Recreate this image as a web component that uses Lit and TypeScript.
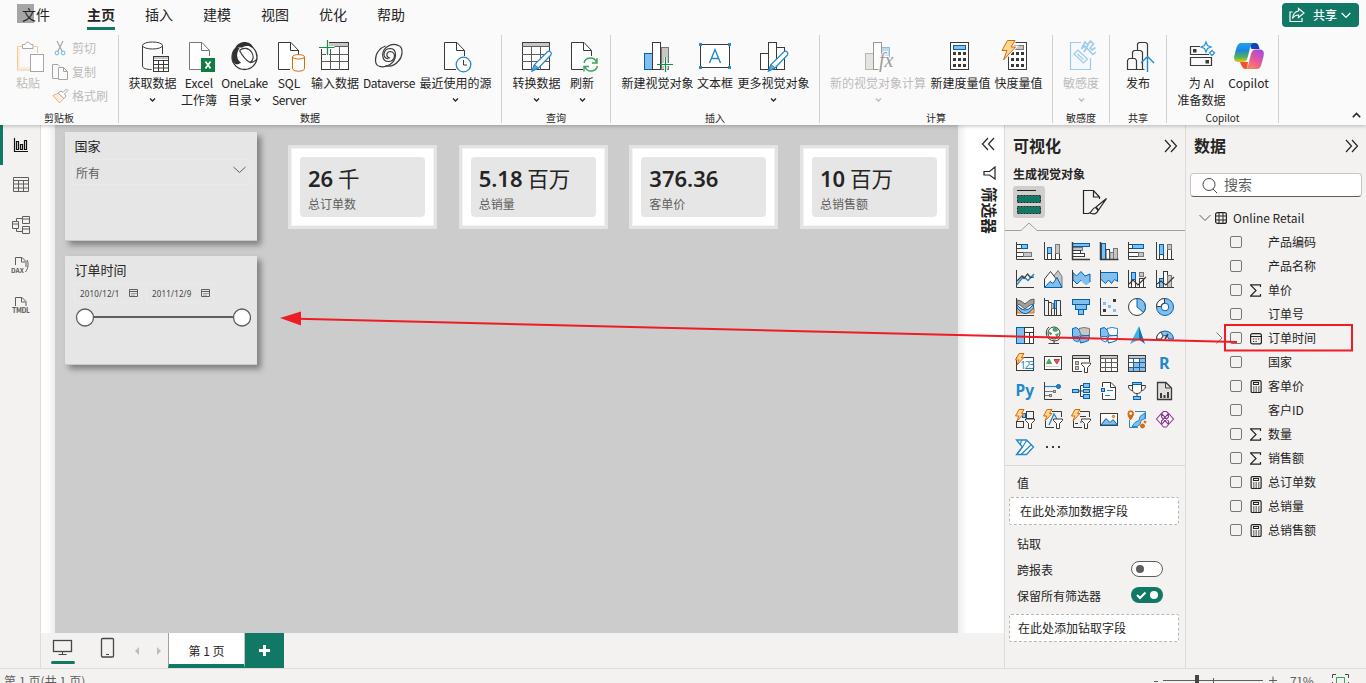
import { LitElement, html, svg, css, nothing } from "lit";
import { customElement } from "lit/decorators.js";

type Kind = "w" | "b" | "g" | "n";
const INK = "#3b3a39";
const SKY = "#83beec";
const GREY = "#c8c6c4";
const fills: Record<Kind, [string, string]> = {
  w: ["#fff", INK],
  b: [SKY, "#0063b1"],
  g: [GREY, "#797775"],
  n: ["none", INK],
};
const r = (x: number, y: number, w: number, h: number, k: Kind = "w") =>
  svg`<rect x=${x} y=${y} width=${w} height=${h} fill=${fills[k][0]} stroke=${fills[k][1]} />`;
const p = (d: string, stroke = INK, fill = "none", sw = 1) =>
  svg`<path d=${d} stroke=${stroke} fill=${fill} stroke-width=${sw} />`;
const c = (x: number, y: number, rad: number, stroke = INK, fill = "none", sw = 1) =>
  svg`<circle cx=${x} cy=${y} r=${rad} stroke=${stroke} fill=${fill} stroke-width=${sw} />`;
const axis = () => p("M1.5 1V18.5H19");
const bolt = (x: number, y: number) =>
  svg`<path transform="translate(${x} ${y})" d="M4 .5h5L6.500 4.500H9L2 12 3.800 7H.5z" fill="#fdd890" stroke="#d8690a"/>`;
const funnel = (x: number, y: number) =>
  svg`<path transform="translate(${x} ${y})" d="M.5 .5h9v1.500l-3 3V10h-3V5l-3-3z" fill="#fff" stroke="#3b3a39"/>`;

/* ---------- ribbon icons, drawn on the ribbon's own coordinate grid ---------- */
const page = (x: number, y: number, s = INK) => svg`
  <path d="M${x + 9} ${y + 27.5}H${x + 0.5}V${y + 0.5}H${x + 13}L${x + 20.5} ${y + 8}V${y + 13}" fill="#fff" stroke="none"/>
  <path d="M${x + 12} ${y + 27.5}H${x + 0.5}V${y + 0.5}H${x + 13}L${x + 20.5} ${y + 8.5}V${y + 14}M${x + 12.5} ${y + 0.5}V${y + 8.5}H${x + 20.5}" fill="none" stroke=${s}/>`;
const grid = (x: number, y: number) => svg`
  <rect x=${x + 0.5} y=${y + 0.5} width="27" height="27" fill="#fff" stroke=${INK}/>
  <rect x=${x + 1} y=${y + 1} width="26" height="3" fill=${GREY}/>
  <path d="M${x} ${y + 4.5}h28M${x} ${y + 12.5}h28M${x} ${y + 19.5}h28M${x + 9.5} ${y + 5}v23M${x + 18.500} ${y + 5}v23" stroke="#605e5c" fill="none"/>`;
const pencil = (x: number, y: number) => svg`
  <path transform="translate(${x} ${y})" d="M.5 20.500L3 14 16 1.300c2-1.600 5 .9 3.400 3.200L7 17.500z" fill="#fff" stroke="#2188ca" stroke-width="1.200"/>
  <path transform="translate(${x} ${y})" d="M.5 20.500L3 14l4 3.500z" fill="#5aa9e0" stroke="#2188ca"/>`;
const calc = (x: number, top: string, line: string) => svg`
  <rect x=${x + 0.5} y="42.5" width="18" height="27" fill="#fff" stroke=${INK}/>
  <rect x=${x + 3.5} y="45.5" width="12" height="4" fill=${top} stroke=${line}/>
  ${[0, 1, 2].map((j) => [0, 1, 2].map((i) => svg`<rect x=${x + 3 + i * 5} y=${52 + j * 6} width="3" height="3" fill=${INK}/>`))}`;

const ribbonIcons: Record<string, () => unknown> = {
  getdata: () => svg`
    <path d="M142.500 45.500V66c0 2.500 4 3.500 9 3.500M162.500 45.500V54" fill="none" stroke=${INK}/>
    <ellipse cx="152.500" cy="45.500" rx="10" ry="3.500" fill="#fff" stroke=${INK}/>
    <rect x="153.500" y="56.500" width="15" height="15" fill="#fff" stroke=${INK}/>
    <path d="M154 58h14" stroke=${GREY} stroke-width="2"/>
    <path d="M153 60.500h16M153 64.500h16M153 68h16M158.500 60v11M163.500 60v11" stroke=${INK} fill="none"/>`,
  excel: () => svg`${page(189, 42, "#797775")}
    <rect x="201" y="58" width="14" height="14" fill="#107c41"/>
    <path d="M205.500 61.500l5 7M210.500 61.500l-5 7" stroke="#fff" stroke-width="1.800"/>`,
  onelake: () => svg`
    <circle cx="244.500" cy="57" r="12.500" fill="#fff" stroke=${INK} stroke-width="1.300"/>
    <path d="M235.500 47.500c1-3 5-5.500 9-5.500s7.500 2 9 6c-4-2.500-8-2.500-11-.5z" fill="#323130"/>
    <path d="M236.500 47c-4.500 4.500-5.500 10.500-3 15 2 3 4 3 7 .8-4-4.500-4.500-9-1-14.800z" fill="#323130"/>
    <path d="M239.500 50.500c3.500-3 9-3 12 1.500s1.500 9-1.500 10.500M239.500 50.500c3.500 6.500 6 9.500 10.500 12 3.500.5 5-1.500 7-3.500M233 62.500c2.500-2 5-2 7.500.5" fill="none" stroke=${INK} stroke-width="1.200"/>`,
  sql: () => svg`${page(278, 42)}
    <path d="M292.500 57v11.500c0 3.600 12 3.600 12 0V57" fill="#fff" stroke="#d8690a"/>
    <ellipse cx="298.500" cy="56.800" rx="6" ry="2.200" fill="#fff" stroke="#d8690a"/>`,
  enter: () => svg`${grid(321, 42)}
    <rect x="318" y="39" width="11" height="8" fill="#fafafa"/>
    <path d="M319 47.500h15.500M327.500 40v15" stroke="#fafafa" stroke-width="3"/>
    <path d="M319 47.500h15.500M327.500 40v15" stroke="#0f9146" stroke-width="1.200"/>`,
  dataverse: () => svg`<g fill="none" stroke=${INK} stroke-width="1.200">
    <path d="M399.500 46c-4-2.500-9-1.500-12 .5-7 4.500-6 15 1 15 6.500 0 8.500-9 2-10-4.500 0-5 6-.5 6.500"/>
    <path d="M378.500 66c4 1.500 8.500 .5 11.500-1.500 7-4.500 7.500-15.500 .5-16-7 0-9.500 9.500-2 10.500"/>
    <path d="M399.500 46c4 2.500 3 11-1 15-4 4.500-9 6-13 4.500M378.500 66c-4-1.500-4-10 0-15 2-2.500 4-4 7-5"/></g>`,
  recent: () => svg`${page(444, 42)}
    <circle cx="463.500" cy="64.500" r="7.300" fill="#fff" stroke="#2188ca" stroke-width="1.300"/>
    <path d="M463.500 60v5h3.500" fill="none" stroke=${INK}/>`,
  transform: () => svg`${grid(522, 42)}${pencil(531.500, 50.500)}`,
  refresh: () => svg`${page(571, 42)}
    <path d="M584 63c1.500-6 10-7 12.500-1M597 58v5h-5M597.500 66c-1.500 6-10 7-12.500 1M584 71.500v-5h5" fill="none" stroke="#38a457" stroke-width="1.400"/>`,
  newvisual: () => svg`
    <rect x="644.500" y="53.500" width="8" height="16" fill=${SKY} stroke="#0063b1"/>
    <rect x="661.500" y="47.500" width="7" height="22" fill=${GREY} stroke="#797775"/>
    <rect x="652.500" y="42.500" width="8" height="27" fill="#fff" stroke=${INK}/>
    <path d="M662 64.500h11M665.500 57v15" stroke="#fafafa" stroke-width="3"/>
    <path d="M657 64.500h16M665.500 57v15" stroke="#0f9146" stroke-width="1.200"/>`,
  textbox: () => svg`
    <rect x="700.500" y="44.500" width="29" height="23" fill="#fff" stroke=${INK}/>
    ${[[699, 43], [728, 43], [699, 66], [728, 66]].map(([x, y]) => svg`<rect x=${x} y=${y} width="3" height="3" fill="#2188ca"/>`)}
    <path d="M709.500 63l5.500-13.500L720.500 63M711.500 58.500h7" fill="none" stroke="#2188ca" stroke-width="1.400"/>`,
  morevisual: () => svg`
    <rect x="760.500" y="53.500" width="8" height="16" fill="#fff" stroke=${INK}/>
    <rect x="776.500" y="47.500" width="8" height="22" fill="#fff" stroke=${INK}/>
    <rect x="768.500" y="42.500" width="8" height="27" fill="#fff" stroke=${INK}/>${pencil(768, 50.500)}`,
  viscalc: () => svg`<g opacity=".5">
    <rect x="865.500" y="53.500" width="8" height="16" fill="#d2d0ce" stroke="#797775"/>
    <rect x="881.500" y="47.500" width="8" height="10" fill=${SKY} stroke="#2188ca"/>
    <rect x="873.500" y="42.500" width="8" height="27" fill="#fff" stroke=${INK}/></g>
    <text x="879" y="67" class="fx">fx</text>`,
  measure: () => calc(950, SKY, "#0063b1"),
  quick: () => svg`${calc(1008, GREY, "#797775")}
    <path d="M1007.500 40.500h7.500l-4 6.500h4.500l-12 13 3.500-9.500h-5z" fill="#fdd890" stroke="#fafafa" stroke-width="3"/>
    <path d="M1007.500 40.500h7.500l-4 6.500h4.500l-12 13 3.500-9.500h-5z" fill="#fdd890" stroke="#d8690a"/>`,
  sensitivity: () => svg`<g stroke="#9fcae8" fill="none" stroke-width="1.200">
    <path d="M1081 42.500h-10.500v27h20V58" fill="#f4f9fd"/>
    <path d="M1074 54l4-4 9.500 9-4 4zM1077.500 54l6 5.500"/>
    <path d="M1081.500 49l3-3 8.500 8.500 3-2.500M1084.500 41.500l3 3 3-3.500 3 3-3.500 4 2 2 3.500-2.500M1081.500 49l3.500-7.500M1084 52l4.500-8" stroke-width="1.600"/></g>`,
  publish: () => svg`<g fill="none" stroke=${INK} stroke-width="1.200">
    <path d="M1127.500 69.500v-9l1.500-2h6l1.500 2v9zM1132.500 58v-6l1.500-1.500h6.500l2 1.500v17.500M1137.500 50v-6l1.500-1.500h7l1.500 1.500v12M1136.500 69.500h8"/></g>
    <path d="M1147.500 72V56.500M1141 63l6.500-6.500 6.500 6.500" fill="none" stroke="#2188ca" stroke-width="1.400"/>`,
  ai: () => svg`<g fill="none" stroke=${INK} stroke-width="1.200">
    <path d="M1200 46.500h-9.500v8H1209M1190.500 57.500h21v8h-21z"/></g>
    <rect x="1193" y="49" width="3.500" height="3.500" fill=${INK}/><rect x="1205.500" y="60" width="3.500" height="3.500" fill=${INK}/>
    <path d="M1206 42l1.500 3.500 3.500 1.500-3.500 1.500L1206 52l-1.500-3.500L1201 47l3.500-1.500zM1212 50.500l2.500 2.500-2.500 2.500-2.500-2.500z" fill="none" stroke="#2f96d6" stroke-width="1.300"/>`,
  copilot: () => svg`<defs>
    <linearGradient id="ca" x1="0" y1="0" x2="0" y2="1"><stop offset="0" stop-color="#18a7ee"/><stop offset=".4" stop-color="#1c86dc"/><stop offset=".75" stop-color="#54b353"/><stop offset="1" stop-color="#e8c81e"/></linearGradient>
    <linearGradient id="cb" x1=".8" y1="0" x2=".2" y2="1"><stop offset="0" stop-color="#a04be0"/><stop offset=".5" stop-color="#e6589c"/><stop offset="1" stop-color="#fb8a54"/></linearGradient></defs>
    <path d="M1249 43h6c3 0 3.500 2 4.500 6h-8z" fill="#1443b8"/>
    <path d="M1240 62h8l-1 7h-1c-3 0-4-2-6-7z" fill="#f0522c"/>
    <path d="M1241 43h13c-3 0-3.500 3-4.500 7l-2 8c-1 3-2 4-5 4h-4c-4 0-5-2.500-4-7 2-7 2.500-12 6.500-12z" fill="url(#ca)"/>
    <path d="M1257.500 69h-13c3 0 3.500-3 4.500-7l2-8c1-3 2-4.500 5-4.500h3.500c4 0 5 2.500 4 7-2 7-2.500 12.500-6 12.500z" fill="url(#cb)"/>`,
};

interface Btn { x: number; w: number; icon: string; a: string; b?: string; chev?: boolean; off?: boolean; }
interface Group { w: number; pad: number; name: string; items: Btn[]; }
const groups: Group[] = [
  { w: 383, pad: 10, name: "数据", items: [
    { x: 129, w: 47, icon: "getdata", a: "获取数据", chev: true },
    { x: 176, w: 46, icon: "excel", a: "Excel", b: "工作簿" },
    { x: 222, w: 45, icon: "onelake", a: "OneLake", b: "目录", chev: true },
    { x: 267, w: 44, icon: "sql", a: "SQL", b: "Server" },
    { x: 311, w: 48, icon: "enter", a: "输入数据" },
    { x: 359, w: 60, icon: "dataverse", a: "Dataverse" },
    { x: 419, w: 73, icon: "recent", a: "最近使用的源", chev: true } ] },
  { w: 109, pad: 10, name: "查询", items: [
    { x: 512, w: 49, icon: "transform", a: "转换数据", chev: true },
    { x: 561, w: 42, icon: "refresh", a: "刷新", chev: true } ] },
  { w: 209, pad: 10, name: "插入", items: [
    { x: 621, w: 73, icon: "newvisual", a: "新建视觉对象" },
    { x: 694, w: 42, icon: "textbox", a: "文本框" },
    { x: 736, w: 75, icon: "morevisual", a: "更多视觉对象", chev: true } ] },
  { w: 233, pad: 9, name: "计算", items: [
    { x: 829, w: 98, icon: "viscalc", a: "新的视觉对象计算", chev: true, off: true },
    { x: 927, w: 67, icon: "measure", a: "新建度量值" },
    { x: 994, w: 49, icon: "quick", a: "快度量值" } ] },
  { w: 57, pad: 0, name: "敏感度", items: [{ x: 1053, w: 56, icon: "sensitivity", a: "敏感度", chev: true, off: true }] },
  { w: 57, pad: 0, name: "共享", items: [{ x: 1110, w: 56, icon: "publish", a: "发布" }] },
  { w: 112, pad: 10, name: "Copilot", items: [
    { x: 1177, w: 49, icon: "ai", a: "为 AI", b: "准备数据" },
    { x: 1226, w: 45, icon: "copilot", a: "Copilot" } ] },
];
const smallChev = () => html`<svg class="chev" width="7" height="6" viewBox="0 0 7 6"><path d="M1 1.500l2.500 2.500L6 1.500" fill="none" stroke="currentColor" stroke-width="1.300"/></svg>`;

/* ---------- visual gallery, 20 × 20 icons ---------- */
const mapShape = (right: Kind) => svg`
  <path d="M1.500 3.500l4-1 3 3 1.500 4-2 2H1.500z" fill=${SKY} stroke="#0063b1"/>
  <path d="M8 3.500l5-1 5.500 1v6l-3 1.500-5.500-1-1.500-4z" fill=${fills[right][0]} stroke=${right === "g" ? "#797775" : "#2188ca"}/>
  <path d="M1.500 11.500H8l.5 2.500-1.500 3-4-1.500z" fill=${right === "g" ? SKY : "#fff"} stroke="#2188ca"/>
  <path d="M9.500 11l9-.5-1 5-4 1.500-4 1-1-4z" fill=${right === "g" ? SKY : "#fff"} stroke="#0063b1"/>`;
const gallery: (() => unknown)[] = [
  () => svg`${r(1.5, 3.5, 5, 4)}${r(6.5, 3.5, 6, 4, "b")}${r(1.5, 11.500, 7, 4)}${r(8.500, 11.500, 8, 4, "g")}${axis()}`,
  () => svg`${r(4.500, 12.500, 4, 6)}${r(4.500, 6.500, 4, 6, "b")}${r(12.500, 12.500, 4, 6)}${r(12.500, 3.500, 4, 9, "g")}${axis()}`,
  () => svg`${r(1.500, 2.500, 17, 3, "b")}${r(1.500, 6.500, 10, 3, "g")}${r(1.500, 9.500, 8, 3)}${r(1.500, 12.500, 12, 3)}${p("M1 18.500h18", INK, "none", 1.500)}${p("M1.500 1v18", INK, "none", 1.500)}`,
  () => svg`${r(2.500, 2.500, 4, 16, "b")}${r(7, 8.500, 3.500, 10)}${r(11, 11.500, 3.500, 7, "g")}${r(14.500, 7.500, 4, 11, "g")}${p("M1 18.500h18.500", INK, "none", 1.500)}${p("M1.500 1v18", INK, "none", 1.500)}`,
  () => svg`${r(1.500, 3.500, 4, 4)}${r(5.500, 3.500, 11, 4, "b")}${r(1.500, 11.500, 10, 4)}${r(11.500, 11.500, 5, 4, "g")}${axis()}`,
  () => svg`${r(4.500, 13.500, 4, 5)}${r(4.500, 3.500, 4, 10, "b")}${r(12.500, 8.500, 4, 10)}${r(12.500, 3.500, 4, 5, "g")}${axis()}`,
  () => svg`${axis()}${p("M2 15.500l6.500-8 4.500 4 6-6.500", "#2188ca", "none", 1.400)}${p("M2 12l5-5 2 2.500L12.500 5l3 3.500 3.500-.5", INK, "none", 1.200)}`,
  () => svg`${p("M10 8l5-6.500 4 6v11h-6z", "#797775", GREY)}${p("M1.500 14V10l6-7.500L14 11l-5 7H1.500z", INK, "#fff")}${p("M1.500 18.500L7 12.500l3 2 4-6 5 10z", "#0063b1", SKY)}`,
  () => svg`${p("M2 3.500L5.500 7 10 2.500l4 4.500 5-2v8L15 17l-5-5.500L6 15l-4-4z", "#0063b1", SKY)}${p("M2 12.500l4 4 4.500-4.500L15 17l4-3.500", "#fff", "none", 1)}${axis()}`,
  () => svg`${p("M1.500 3.500h17v9l-3-2-3 4-3-3.500-3 3.500-5-4.500z", "#0063b1", SKY)}${axis()}`,
  () => svg`${r(4.500, 9.500, 4, 9)}${r(4.500, 3.500, 4, 7, "b")}${r(12.500, 9.500, 4, 9)}${r(12.500, 3.500, 4, 4, "g")}${p("M2 15l4-4 5 5 8-8", INK, "none", 1.200)}${axis()}`,
  () => svg`${r(4.500, 9.500, 4, 9, "b")}${r(8.500, 2.500, 4, 16)}${r(12.500, 6.500, 4, 12, "g")}${p("M2 15l4-3 5 4 8-8", INK, "none", 1.200)}${axis()}`,
  () => svg`${r(3.500, 12.500, 3, 3)}${p("M2 3l4 1 4 3 5-4 4-1v5l-4 1-5 4-5-4-3-1z", "#605e5c", "#a19f9d")}${p("M2 11h4l2 4h5l2-4h4v5H2z", "#d8690a", "#fbb36b")}${p("M2 8l4 4 4 1 4-1 4.500-4.500V11l-4 4-3 1.500H9L6 15l-4-4z", "#0063b1", SKY)}${axis()}`,
  () => svg`${axis()}${p("M5.500 18V3.500H2M5.500 5.500h3v13M8.500 18V11.500h3v7M17.500 18.500V3.500h-4v15")}${r(8.500, 6.500, 2, 5, "g")}${r(11.500, 3.500, 2, 8, "b")}`,
  () => svg`${r(1.500, 2.500, 17, 5, "b")}${r(4.500, 7.500, 11, 5, "b")}${r(7.500, 12.500, 5, 5, "b")}`,
  () => svg`${axis()}<g><rect x="14" y="2" width="3" height="3" fill=${INK}/><rect x="4" y="5" width="3" height="3" fill=${SKY}/><rect x="9" y="8" width="3" height="3" fill=${SKY}/><rect x="4" y="12" width="3" height="3" fill=${INK}/><rect x="14" y="12" width="3" height="3" fill=${SKY}/></g>`,
  () => svg`${c(10, 10, 8.500, INK, "#fff")}${p("M10 1.500a8.500 8.500 0 0 1 6.500 14L10 10z", "#0063b1", SKY)}`,
  () => svg`${c(10, 10, 6, SKY, "none", 5)}${c(10, 10, 8.500, "#0063b1")}${c(10, 10, 3.800, "#0063b1", "#fff")}${p("M1.500 9.500a8 8 0 0 1 8-8v4.500a4 4 0 0 0-3.500 3.500z", INK, "#fff")}`,
  () => svg`${r(1.500, 2.500, 8, 16, "b")}${r(9.500, 2.500, 9, 5)}${r(9.500, 7.500, 5, 11)}${r(14.500, 7.500, 4, 5)}${r(14.500, 12.500, 4, 6)}`,
  () => svg`${c(11, 8, 6, INK, "#fff")}${p("M10 3.500l3-.5 2 2.500-3 1-2-1zM12.500 9.500l3-1-1.500 3.500zM6.500 7l2 1-.5 2-1.500-1z", "#0f9146", "#58a76b", .6)}${p("M6 2c-5 4-3 13 5 14 3 0 5-1 6-3M11 15.500v3M5.500 18.500H16")}`,
  () => mapShape("g"),
  () => mapShape("w"),
  () => svg`<path d="M12 1L3 19l9-4.500z" fill="#39b5e6"/><path d="M12 1l6 18-6-4.500z" fill="#1273b8"/>`,
  () => svg`${p("M1.500 14a8.500 8 0 0 1 17 0h-5a3.500 3.500 0 0 0-7 0z", "#0063b1", SKY)}${p("M1.500 14A8 8 0 0 1 6 7l2 4c-1 1-1.500 2-1.500 3z", INK, "#fff")}${p("M10 14l3-5", INK, "none", 1.500)}`,
  () => svg`${r(1.500, 4.500, 17, 13)}<text x="5" y="15.500" class="num">123</text>${bolt(0, 0)}`,
  () => svg`${r(1.500, 3.500, 17, 13)}${p("M3.500 10.500l2.500-4.500 2.500 4.500z", "#38a457", "#58a76b")}${p("M11 6.500h5.500L13.800 11z", "#d13438", "#e2555a")}${p("M3 13.500h13", "#d2d0ce")}`,
  () => svg`${p("M11 18.500H1.500v-16h17V9", INK, "#fff")}${p("M2 4h16", GREY, "none", 2)}${p("M1.500 5.500h17")}${r(4.500, 8.500, 3, 3, "g")}${r(4.500, 13.500, 3, 3, "g")}${funnel(10, 9.500)}`,
  () => svg`${r(1.500, 2.500, 17, 16)}${p("M2 4h16", GREY, "none", 2)}${p("M1 5.500h18M1 9.500h18M1 14.500h18M6.500 5v13M12.500 5v13", "#605e5c")}`,
  () => svg`${r(1.500, 2.500, 17, 16)}<path d="M13 6h5v12H2v-3.500h11zM7 10h6v4H7z" fill=${SKY}/>${p("M2 4h16", GREY, "none", 2)}${p("M1 5.500h18M1 9.500h18M1 14.500h18M6.500 5v13M12.500 5v13", "#2b5f8c")}${p("M1.500 18.500v-16h17")}`,
  () => svg`<text x="4" y="16" class="letter">R</text>`,
  () => svg`<text x="0.500" y="15" class="letter py">Py</text>`,
  () => svg`${p("M1.500 1v17.500H19")}${p("M2 5.500h12", "#2188ca", "none", 1.200)}${c(15.500, 5.500, 2, "#0063b1", "#2188ca")}${p("M2 10.500h8M2 14.500h5", "#797775")}${r(10.500, 9.500, 2, 2, "g")}${r(6.500, 13.500, 2, 2, "g")}`,
  () => svg`${p("M7 10h5M14 4.500H9.500v11H14")}${r(1.500, 8.500, 6, 3, "b")}${r(12.500, 2.500, 6, 4, "b")}${r(12.500, 8.500, 6, 3, "b")}${r(12.500, 13.500, 6, 4, "b")}`,
  () => svg`${p("M3.500 6V1.500H12l4.500 4.500v12.500h-13V12", INK, "#fff")}${p("M11.500 2v4.500h5")}${r(2.500, 7.500, 3, 3, "b")}${p("M8 9.500h6M6 14.500h5", "#2188ca")}`,
  () => svg`${p("M5.500 2.500h9v6c0 3-2 4-4.500 4s-4.500-1-4.500-4z", INK, "#fff")}${r(5.500, 1.500, 9, 2, "b")}${p("M5 4.500H1.500c0 4 2 5 4.500 5M15 4.500h3.500c0 4-2 5-4.500 5M10 12.500v3")}${r(6.500, 15.500, 7, 3, "b")}`,
  () => svg`${p("M2.500 1.500H11l5.500 5.500v11.500h-14z", INK, "#e1dfdd", 1.300)}${p("M10.500 2v5h5")}${p("M6 17v-5M9.500 17v-3M13 17v-6", INK, "none", 2)}`,
  () => svg`${r(11.500, 2.500, 7, 7, "n")}${r(7.500, 4.500, 3, 4, "b")}${r(1.500, 12.500, 7, 6, "n")}${bolt(0, 0)}${funnel(10, 9.500)}`,
  () => svg`${p("M9 2.500h9.500V8M2.500 12v6.500H11")}${p("M6 16l5-11 3 5", "#2188ca", "none", 1.300)}${bolt(0, 0)}${funnel(10, 9.500)}`,
  () => svg`${p("M9 2.500h9.500V8M2.500 12v6.500H11M9 7.500h6M4 14.500h3M9 13h2")}${bolt(0, 0)}${funnel(10, 9.500)}`,
  () => svg`${r(1.500, 4.500, 17, 12)}${p("M2 16l5-6.500 4 4 3-3 4.500 5.500z", "#0063b1", SKY)}${c(14.500, 7.500, 1.200, "#d8690a", "#fbb36b")}`,
  () => svg`${p("M8 2.500h10.500V10M2.500 11v7.500H11", "#2188ca")}${p("M5 17.500l3-4 4-2 1-4 5-3.500v5.500l-4 2-1 4-3 2z", "#2188ca", SKY)}${p("M3.500 11C1 7 1 6 1 4.500a2.700 2.700 0 0 1 5.500 0C6.500 6 6 7 3.500 11z", "#d8690a", "#d8690a")}${c(3.700, 4.500, 1, "#fff", "#fff")}${c(18, 13, 1, "#d8690a", "#d8690a")}${c(15.500, 17, 2, "#d8690a", "#d8690a")}`,
  () => svg`<g fill="#fff" stroke="#8e3a96" stroke-width="1.100"><path d="M6.500 4.500l2-2h3l2 2 5 5.500-5 5.500-2 2.500h-3l-2-2.500-5-5.500z"/><path d="M6.500 4.500l7 7.500v3.500M13.500 4.500L6.500 12v3.500M6.500 4.500V8l7 7.500M13.500 4.500V8l-7 7.500" fill="none"/></g>`,
  () => svg`${p("M1.500 3h10l7 7-7 7.500h-10l6-7.500z", "#2188ca", "#fff", 1.300)}${p("M6.500 3l-1 4M12 3L7.500 10l-5 7M16.500 7.500L6 17.500", "#2188ca", "none", 1.200)}`,
  () => svg`<g fill=${INK}><rect x="3" y="9" width="2" height="2"/><rect x="9" y="9" width="2" height="2"/><rect x="15" y="9" width="2" height="2"/></g>`,
];

type FieldIcon = "sum" | "calc" | "date" | undefined;
const fields: [string, FieldIcon][] = [
  ["产品编码", undefined], ["产品名称", undefined], ["单价", "sum"], ["订单号", undefined], ["订单时间", "date"],
  ["国家", undefined], ["客单价", "calc"], ["客户ID", undefined], ["数量", "sum"], ["销售额", "sum"],
  ["总订单数", "calc"], ["总销量", "calc"], ["总销售额", "calc"],
];
const fieldIcon = (k: FieldIcon) => {
  if (k === "sum") return p("M10.500 3V.8H.5L6 6.500.5 12.200h10V10", "#252423", "none", 1.200);
  if (k === "date") return svg`<rect x=".6" y="1.600" width="10.800" height="10.300" rx="2" fill="none" stroke="#252423" stroke-width="1.200"/><path d="M1 4.500h10.500" stroke="#252423"/><path d="M5.500 7h1.200M8 7h1.200M3 9.500h1.200M5.500 9.500h1.200M3 7h1.200" stroke="#252423" stroke-width="1.200"/>`;
  if (k === "calc") return svg`<rect x="1.100" y=".6" width="10" height="12" rx="1.500" fill="none" stroke="#252423" stroke-width="1.200"/><rect x="3.500" y="2.500" width="5" height="2" fill="none" stroke="#252423"/><path d="M3 7h1.500M5.500 7H7M8 7h1.500M3 9h1.500M5.500 9H7M8 9h1.500M3 11h1.500M5.500 11H7M8 11h1.500" stroke="#252423" stroke-width="1.200"/>`;
  return nothing;
};
const dblChev = (left = false) => html`<svg width="14" height="14" viewBox="0 0 14 14"><path d=${left ? "M7 1L1.500 7 7 13M13 1L7.500 7l5.500 6" : "M1 1l5.500 6L1 13M7 1l5.500 6L7 13"} fill="none" stroke="#252423" stroke-width="1.200"/></svg>`;
const cal = () => html`<svg class="cal" width="9" height="8" viewBox="0 0 9 8"><path d="M.5.500h8v7h-8zM0 2.500h9M2.500 4.500h1M4.500 4.500h1M6.500 4.500h1M2.500 6h1M4.500 6h1" fill="none" stroke="#605e5c"/></svg>`;

@customElement("app-root")
export class AppRoot extends LitElement {
  static styles = css`
    :host { display: block; position: relative; width: 1366px; height: 683px; overflow: hidden; background: #f3f2f1; color: #252423;
      font: 12px/17px "Noto Sans CJK SC", "Noto Sans", sans-serif; }
    * { box-sizing: border-box; }
    svg { display: block; flex: none; }
    .app { display: flex; flex-direction: column; height: 683px; white-space: nowrap; }
    .top { height: 125px; background: #fafafa; flex: none; box-shadow: 0 1px 4px rgba(0,0,0,.25); z-index: 1; position: relative; }
    .tabs { display: flex; height: 35px; font-size: 14px; line-height: 28px; }
    .tab { width: 58px; text-align: center; height: 30px; }
    .file { width: 72px; background: linear-gradient(#a5a5a5, #a5a5a5) 17px 4px / 17px 19px no-repeat; }
    .home { font-weight: 700; background: linear-gradient(#117865, #117865) 15px 27px / 28px 3px no-repeat; }
    .share { margin: 3px 7px 0 auto; width: 77px; height: 24px; border-radius: 4px; background: #117865; color: #fff; display: flex;
      align-items: center; padding-left: 7px; font-size: 12px; font-weight: 500; line-height: 24px; gap: 8px; }
    .share .dn { margin-left: -4px; }
    .ribbon { display: flex; height: 90px; }
    .group { height: 88px; border-right: 1px solid #d2d0ce; display: flex; flex-direction: column; flex: none; }
    .btns { display: flex; height: 74px; flex: none; }
    .btn { display: flex; flex-direction: column; align-items: center; height: 74px; padding-top: 3px; }
    .btn span { line-height: 17px; height: 17px; display: flex; align-items: center; gap: 2px; }
    .btn .lat { letter-spacing: -.4px; }
    .btn .chev { margin-top: 1px; }
    .off { color: #bdbbb9; }
    .fx { font: italic 20px "Liberation Serif", serif; fill: #9d9b99; paint-order: stroke; stroke: #fafafa; stroke-width: 2px; }
    .gname { font-size: 10px; line-height: 17px; text-align: center; flex: none; }
    .clip { width: 119px; }
    .clipbody { display: flex; height: 74px; flex: none; color: #bdbbb9; padding-left: 15px; }
    .paste { width: 30px; padding-top: 5px; display: flex; flex-direction: column; }
    .paste span { line-height: 18px; margin-left: 1px; }
    .cliplist { display: flex; flex-direction: column; padding: 0 0 0 6px; }
    .cliplist div { display: flex; align-items: center; gap: 3px; height: 24px; }
    .cliplist svg { margin-top: 1px; }
    .collapse { margin-left: auto; padding: 77px 5px 0 0; }
    .body { display: flex; height: 543px; flex: none; }
    .nav { width: 41px; border-right: 1px solid #dedcda; display: flex; flex-direction: column; }
    .nav div { height: 40px; display: flex; align-items: center; padding-left: 11px; }
    .nav .on { border-left: 3px solid #117865; padding-left: 8px; }
    .main { width: 963px; display: flex; flex-direction: column; }
    .stage { height: 508px; background: linear-gradient(90deg, #fff 6px, #ededed 14px, #ededed 917px, #fff 926px); display: flex; }
    .page { margin-left: 14px; width: 903px; background: #ccc; padding: 7px 9px 0 10px; display: flex; }
    .slicers { width: 192px; display: flex; flex-direction: column; gap: 15px; }
    .slicer { height: 109px; background: #e6e6e6; box-shadow: 4px 4px 6px rgba(0,0,0,.38); border-bottom: 1px solid #c8c8c8; padding: 4px 7px; }
    .slicer h4 { margin: 0 0 0 2.500px; font-weight: 400; font-size: 13px; line-height: 19px; }
    .drop { border: 1px solid #eaeaea; height: 26px; margin-top: 4px; display: flex; justify-content: space-between; align-items: center; padding: 0 3px 0 3px; color: #605e5c; }
    .drop svg { margin-bottom: 4px; }
    .dates { display: flex; gap: 4px; margin: 4px 0 0 2px; font-size: 8px; color: #444; }
    .date { width: 68px; height: 20px; border: 1px solid #eaeaea; display: flex; align-items: center; justify-content: space-between; padding: 1px 3px 0 5px; font-family: "Noto Sans", sans-serif; font-size: 8px; letter-spacing: .17px; }
    .cal { margin-bottom: 2px; }
    .range { margin: 4px 0 0 3px; }
    .cards { display: flex; justify-content: space-between; width: 661px; margin: 13px 0 0 31px; }
    .card { width: 149px; height: 84px; background: #fff; border: 3px solid #e3e3e3; padding: 9px; box-shadow: inset 0 0 0 1px #f3f3f3; }
    .card > div { width: 125px; height: 60px; border-radius: 4px; background: #e6e6e6; padding: 6px 8px 0; }
    .val { font: 600 22px/30px "Noto Sans", "Noto Sans CJK SC", sans-serif; word-spacing: -1px; }
    .val i { font-style: normal; font-weight: 400; font-family: "Noto Sans CJK SC", sans-serif; font-size: 21.500px; }
    .cap { color: #605e5c; line-height: 20px; font-size: 12px; margin-top: 1px; }
    .filters { margin-left: 17px; width: 29px; background: #fff; display: flex; flex-direction: column; align-items: center; padding-top: 12px; }
    .filters .fl { margin-right: 3px; }
    .filters .fn { margin-top: 15px; }
    .vert { writing-mode: vertical-rl; font-weight: 700; font-size: 15.600px; line-height: 20px; margin-top: 7px; text-orientation: sideways; }
    .bottom { display: flex; height: 35px; align-items: flex-start; }
    .view { height: 35px; }
    .ptab { margin-left: 6px; width: 77px; height: 35px; background: #fff; border-left: 1px solid #a19f9d; border-right: 1px solid #c8c6c4; border-bottom: 4px solid #117865; text-align: center; line-height: 36px; }
    .add { width: 39px; height: 35px; background: #117865; display: flex; align-items: center; justify-content: center; }
    .viz { width: 182px; border-left: 1px solid #dedcda; border-right: 1px solid #dedcda; display: flex; flex-direction: column; }
    .head { display: flex; justify-content: space-between; align-items: center; height: 24px; margin: 8px 7px 0 8px; font-size: 16px; font-weight: 700; }
    .head svg { margin-top: 1px; }
    .sub { font-weight: 700; margin: 8px 0 0 8px; line-height: 18px; }
    .modes { display: flex; margin: 3px 0 0 8px; }
    .mode { width: 32px; height: 32px; background: #d0cecd; border-radius: 3px; display: flex; align-items: center; justify-content: center; }
    .fmt { margin: 3px 0 0 37px; }
    .gal { display: grid; grid-template-columns: repeat(6, 28px); grid-auto-rows: 28px; margin: 5px 0 0 6px; }
    .gal svg { margin: 4px; overflow: visible; }
    .num { font: 10.500px "Noto Sans", sans-serif; fill: #2188ca; letter-spacing: -1.600px; }
    .letter { font: 700 16px "Noto Sans", sans-serif; fill: #2188ca; }
    .py { font-size: 15.500px; }
    .wells { border-top: 1px solid #d8d6d4; margin-top: 4px; padding: 8px 6px 0 4px; }
    .wells p { margin: 0; padding-left: 8px; line-height: 18px; }
    .well { height: 28px; background: #fff; border: 1px dashed #b8b6b4; border-radius: 2px; line-height: 25px; padding-left: 10px; margin-top: 5px; }
    .wells .second { margin-top: 10px; }
    .wells .last { margin-top: 6px; padding-left: 8px; }
    .row { display: flex; justify-content: space-between; align-items: center; padding: 0 16px 0 8px; height: 26px; }
    .row.first { margin-top: 3px; }
    .data { width: 180px; display: flex; flex-direction: column; }
    .search { margin: 16px 4px 0 4px; height: 24px; border: 1px solid #c8c6c4; border-bottom-color: #605e5c; border-radius: 4px; background: #fff; display: flex; align-items: center; gap: 7px; padding-left: 11px; font-size: 14px; color: #605e5c; }
    .search span, .root span, .field span { padding-bottom: 2px; }
    .tree { margin-top: 9px; }
    .root { display: flex; height: 24px; align-items: center; padding-left: 13px; }
    .root svg + svg { margin-left: 4px; }
    .root span { margin-left: 6px; }
    .field { display: flex; height: 24px; align-items: center; }
    .exp { width: 44px; display: flex; justify-content: flex-end; padding-right: 7px; }
    .box { width: 12px; height: 12px; border: 1px solid #797775; border-radius: 2px; margin-right: 8px; }
    .field svg.fi { margin-right: 5px; }
    .status { height: 15px; border-top: 1px solid #dedcda; display: flex; justify-content: space-between; padding: 3px 0 0 4px; color: #605e5c; }
    .pages { letter-spacing: .1px; }
    .zoombar { display: flex; margin-right: 17px; }
    .zoombar span { width: 24px; margin-right: 18px; letter-spacing: -.3px; }
    .mark { position: absolute; left: 0; top: 0; z-index: 2; pointer-events: none; }
  `;

  private button(b: Btn) {
    return html`<div class="btn ${b.off ? "off" : ""}" style="width:${b.w}px">
      <svg class="ic" width=${b.w} height="36" viewBox="${b.x} 38 ${b.w} 36">${ribbonIcons[b.icon]()}</svg>
      <span class=${/^[A-Z][a-z]+[A-Z]?[a-z]{3,}$/.test(b.a) && b.a.length > 6 && b.a !== "Copilot" ? "lat" : ""}>${b.a}</span>
      ${b.b ? html`<span class=${b.b === "Server" ? "lat" : ""}>${b.b}${b.chev ? smallChev() : nothing}</span>` : b.chev ? html`<span>${smallChev()}</span>` : nothing}
    </div>`;
  }

  private top() {
    return html`<div class="top">
      <div class="tabs">
        <div class="tab file">文件</div><div class="tab home">主页</div>
        ${["插入", "建模", "视图", "优化", "帮助"].map((t) => html`<div class="tab">${t}</div>`)}
        <div class="share">
          <svg width="16" height="16" viewBox="0 0 16 16"><path d="M3.500 5H1v9.500h12V11M9.500 1.500L15 6l-5.500 4.500V8C6.500 8 5 9 3.500 11.500 4 7 6 4.500 9.500 4z" fill="none" stroke="#fff" stroke-width="1.200"/></svg>
          <span>共享</span>
          <svg class="dn" width="10" height="7" viewBox="0 0 10 7"><path d="M.7 1L5 5.500 9.300 1" fill="none" stroke="#fff" stroke-width="1.200"/></svg>
        </div>
      </div>
      <div class="ribbon">
        <div class="group clip">
          <div class="clipbody">
            <div class="paste">
              <svg width="30" height="34" viewBox="15 40 30 34"><g fill="none"><path d="M22 46.500h-4.500v23.500H30M34 46.500h3.500V53" stroke="#f0c99c"/><path d="M19 48v20h11" stroke="#fbeeda" stroke-width="2"/><path d="M22.500 48.500v-4h2.500c.5-3 5-3 5.500 0H33v4z" stroke="#a8a6a4" fill="#fff"/><rect x="30.500" y="54.500" width="13" height="17" fill="#fff" stroke="#a8a6a4"/></g></svg>
              <span>粘贴</span>
            </div>
            <div class="cliplist">
              <div><svg width="18" height="18" viewBox="51 38 18 18"><path d="M57 40l5.500 11M63 40l-5.500 11" stroke="#a8a6a4" fill="none" stroke-width="1.200"/><circle cx="57" cy="52" r="1.800" fill="none" stroke="#8fc3e8" stroke-width="1.300"/><circle cx="63.200" cy="52" r="1.800" fill="none" stroke="#8fc3e8" stroke-width="1.300"/></svg>剪切</div>
              <div><svg width="18" height="18" viewBox="51 62 18 18"><path d="M58 77.500h-5.500v-14H58l2 2M58.500 66.500h5l4 4v8h-9zM63.500 66.500v4h4" stroke="#a8a6a4" fill="none"/></svg>复制</div>
              <div><svg width="18" height="18" viewBox="51 86 18 18"><path d="M53 94.500l6-2.500 5 5-4.500 5z" stroke="#f0b074" fill="#fdeedd"/><path d="M58 92l3-2 2 1.500 3.500-3.500 1.500 1.500-3.500 3.500 1.500 2-2 2.500z" stroke="#a8a6a4" fill="#fff"/></svg>格式刷</div>
            </div>
          </div>
          <div class="gname">剪贴板</div>
        </div>
        ${groups.map((g) => html`<div class="group" style="width:${g.w}px">
          <div class="btns" style="padding-left:${g.pad}px">${g.items.map((b) => this.button(b))}</div>
          <div class="gname">${g.name}</div></div>`)}
        <div class="collapse"><svg width="9" height="6" viewBox="0 0 9 6"><path d="M.8 5.200l3.700-3.700 3.700 3.700" fill="none" stroke="#252423" stroke-width="1.600"/></svg></div>
      </div>
    </div>`;
  }

  private nav() {
    return html`<div class="nav">
      <div class="on"><svg width="20" height="20" viewBox="0 0 20 20"><path d="M3.500 3v13.500H17M5.500 6.500h2v8h-2zM9.500 9.500h2v5h-2zM13.500 5.500h2v9h-2z" fill="none" stroke="#111" stroke-width="1.200"/></svg></div>
      <div><svg width="20" height="20" viewBox="0 0 20 20"><path d="M2.500 2.500h15v14h-15zM2 5.500h16M2 9h16M2 13h16M7.500 5v12M12.500 5v12" fill="none" stroke="#605e5c"/></svg></div>
      <div><svg width="20" height="20" viewBox="0 0 20 20"><path d="M1.500 6.500h6v7h-6zM1.500 9h6M11.500 1.500h7v7h-7zM11.500 4h7M11.500 11.500h7v7h-7zM11.500 14h7M5.500 6V3.500h6M5.500 14v2.500h6" fill="none" stroke="#605e5c"/></svg></div>
      <div><svg width="20" height="20" viewBox="0 0 20 20"><path d="M4.500 10V2.500H11l4 4V12M10.500 3v4h4M16 5c2 3 1 9-1.500 12" fill="none" stroke="#605e5c"/><text x="0" y="17.500" font-size="6.500" font-weight="700" fill="#605e5c">DAX</text></svg></div>
      <div><svg width="20" height="20" viewBox="0 0 20 20"><path d="M4.500 11V2.500H11l4 4V11M10.500 3v4h4" fill="none" stroke="#605e5c"/><text x="1" y="18" font-size="7" font-weight="700" fill="#605e5c" textLength="18">TMDL</text></svg></div>
    </div>`;
  }

  private stage() {
    const cards = [["26", "千", "总订单数"], ["5.18", "百万", "总销量"], ["376.36", "", "客单价"], ["10", "百万", "总销售额"]];
    return html`<div class="stage">
      <div class="page">
        <div class="slicers">
          <div class="slicer"><h4>国家</h4>
            <div class="drop">所有<svg width="13" height="8" viewBox="0 0 13 8"><path d="M.5 1l6 5.500 6-5.500" fill="none" stroke="#605e5c"/></svg></div></div>
          <div class="slicer"><h4>订单时间</h4>
            <div class="dates"><div class="date">2010/12/1${cal()}</div><div class="date">2011/12/9${cal()}</div></div>
            <svg class="range" width="176" height="20" viewBox="0 0 176 20"><path d="M10 10h156" stroke="#605e5c" stroke-width="2"/><circle cx="10" cy="10.500" r="8.500" fill="#fff" stroke="#605e5c" stroke-width="1.300"/><circle cx="167" cy="10.500" r="8.500" fill="#fff" stroke="#605e5c" stroke-width="1.300"/></svg></div>
        </div>
        <div class="cards">${cards.map(([v, u, l]) => html`<div class="card"><div><div class="val">${v} <i>${u}</i></div><div class="cap">${l}</div></div></div>`)}</div>
      </div>
      <div class="filters"><div class="fl">${dblChev(true)}</div>
        <svg class="fn" width="13" height="14" viewBox="0 0 13 14"><path d="M12 1v12L6.500 9H1V5.500h5.500z" fill="none" stroke="#252423" stroke-width="1.200"/></svg>
        <div class="vert">筛选器</div></div>
    </div>
    <div class="bottom">
      <svg class="view" width="121" height="35" viewBox="41 633 121 35"><g fill="none" stroke="#484644"><rect x="53.500" y="640.500" width="18" height="11" stroke-width="1.300"/><path d="M62.500 652v2.500M58.500 654.500h8"/><rect x="101.500" y="638.500" width="12" height="18.500" rx="1" stroke-width="1.300"/><path d="M106 654.500h3"/></g><rect x="51" y="661" width="24" height="3" rx="1.500" fill="#117865"/><path d="M139 647v8l-4-4zM157 647v8l4-4z" fill="#c0bebc"/></svg>
      <div class="ptab">第 1 页</div>
      <div class="add"><svg width="11" height="11" viewBox="0 0 11 11"><path d="M0 5.500h11M5.500 0v11" stroke="#fff" stroke-width="3"/></svg></div>
    </div>`;
  }

  private viz() {
    return html`<div class="viz">
      <div class="head">可视化${dblChev()}</div>
      <div class="sub">生成视觉对象</div>
      <div class="modes">
        <div class="mode"><svg width="26" height="26" viewBox="0 0 26 26"><path d="M1 1.500h19" stroke="#252423"/><path d="M1.500 6.500h23v7h-23zM1.500 17.500h23v7h-23z" fill="#117865" stroke="#252423" stroke-dasharray="2 1"/></svg></div>
        <svg class="fmt" width="26" height="26" viewBox="0 0 26 26"><path d="M7 24.500H1.500V1.500h10L17.500 8v2M11.500 1.500V8h6" fill="none" stroke="#252423" stroke-width="1.200"/><path d="M24.500 9.500L14 18l2.500 3zM13.500 18.500c-3 0-3 4-6 5.500 4 1.500 8 1 8.500-3z" fill="#f3f2f1" stroke="#252423" stroke-width="1.200"/></svg>
      </div>
      <svg width="180" height="14" viewBox="1005 218 180 14"><path d="M1005 230.500h16l8-7.500 8 7.500h148" fill="none" stroke="#a19f9d"/></svg>
      <div class="gal">${gallery.map((g) => html`<svg width="20" height="20" viewBox="0 0 20 20">${g()}</svg>`)}</div>
      <div class="wells">
        <p>值</p>
        <div class="well">在此处添加数据字段</div>
        <p class="second">钻取</p>
        <div class="row first"><span>跨报表</span><svg width="32" height="16" viewBox="0 0 32 16"><rect x=".5" y=".5" width="31" height="15" rx="7.500" fill="#fff" stroke="#605e5c"/><circle cx="9" cy="8" r="4" fill="#605e5c"/></svg></div>
        <div class="row"><span>保留所有筛选器</span><svg width="32" height="16" viewBox="0 0 32 16"><rect width="32" height="16" rx="8" fill="#117865"/><path d="M6 8l3 3 5.500-5.500" fill="none" stroke="#fff" stroke-width="2"/><circle cx="23" cy="8" r="4" fill="#fff"/></svg></div>
        <div class="well last">在此处添加钻取字段</div>
      </div>
    </div>`;
  }

  private data() {
    return html`<div class="data">
      <div class="head">数据${dblChev()}</div>
      <div class="search"><svg width="15" height="15" viewBox="0 0 15 15"><circle cx="7" cy="6.500" r="6" fill="none" stroke="#484644"/><path d="M11 11l4 4" stroke="#484644"/></svg><span>搜索</span></div>
      <div class="tree">
        <div class="root"><svg width="12" height="8" viewBox="0 0 12 8"><path d="M.5 1L6 6.500 11.500 1" fill="none" stroke="#605e5c"/></svg>
          <svg width="12" height="12" viewBox="0 0 12 12"><rect x=".6" y=".6" width="10.800" height="10.800" rx="2" fill="none" stroke="#252423" stroke-width="1.200"/><path d="M0 4h12M0 8h12M4 0v12M8 0v12" stroke="#252423"/></svg>
          <span>Online Retail</span></div>
        ${fields.map(([name, k]) => html`<div class="field"><div class="exp">${k === "date" ? html`<svg width="7" height="12" viewBox="0 0 7 12"><path d="M.5.500L6 6 .5 11.500" fill="none" stroke="#797775"/></svg>` : nothing}</div>
          <div class="box"></div><svg class="fi" width="13" height="13" viewBox="0 0 13 13">${fieldIcon(k)}</svg><span>${name}</span></div>`)}
      </div>
    </div>`;
  }

  render() {
    return html`<div class="app">
      ${this.top()}
      <div class="body">${this.nav()}<div class="main">${this.stage()}</div>${this.viz()}${this.data()}</div>
      <div class="status"><div class="pages">第 1 页(共 1 页)</div>
        <div class="zoombar"><svg width="136" height="12" viewBox="1154 672 136 12"><path d="M1154 681.500h4M1163 680.500h100M1213.500 678v5M1269 680.500h8M1273 676.500v8" stroke="#605e5c"/><rect x="1195" y="675" width="4" height="9" fill="#484644"/></svg><span>71%</span>
        <svg width="17" height="12" viewBox="0 0 17 12"><path d="M.5 6V2.500H4M13 2.500h3.500V6M.5 10v2M16.500 10v2" fill="none" stroke="#484644"/><path d="M4.500 5.500h8V12h-8z" fill="none" stroke="#38a457"/></svg></div>
      </div>
    </div>
    <svg class="mark" width="1366" height="683" viewBox="0 0 1366 683"><path d="M1237 342L298 318.700" stroke="#ee1c24" stroke-width="2"/><path d="M280 318l21-6.500v14z" fill="#ee1c24"/><rect x="1225" y="325" width="127" height="25.500" fill="none" stroke="#ee1c24" stroke-width="2"/></svg>`;
  }
}
